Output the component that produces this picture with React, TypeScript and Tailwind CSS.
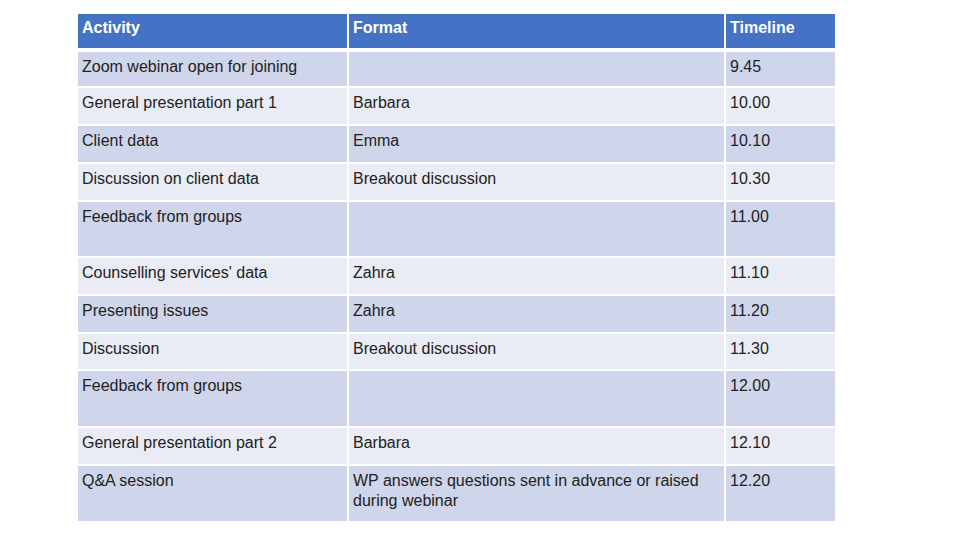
import React from "react";

type Row = {
  activity: string;
  format: string;
  time: string;
  h: string;
  bg: string;
};

const DARK = "bg-[#cfd5ea]";
const LIGHT = "bg-[#e9ebf5]";

const ROWS: Row[] = [
  { activity: "Zoom webinar open for joining", format: "", time: "9.45", h: "h-[34px]", bg: DARK },
  { activity: "General presentation part 1", format: "Barbara", time: "10.00", h: "h-[36px]", bg: LIGHT },
  { activity: "Client data", format: "Emma", time: "10.10", h: "h-[36px]", bg: DARK },
  { activity: "Discussion on client data", format: "Breakout discussion", time: "10.30", h: "h-[36px]", bg: LIGHT },
  { activity: "Feedback from groups", format: "", time: "11.00", h: "h-[54px]", bg: DARK },
  { activity: "Counselling services' data", format: "Zahra", time: "11.10", h: "h-[36px]", bg: LIGHT },
  { activity: "Presenting issues", format: "Zahra", time: "11.20", h: "h-[36px]", bg: DARK },
  { activity: "Discussion", format: "Breakout discussion", time: "11.30", h: "h-[35px]", bg: LIGHT },
  { activity: "Feedback from groups", format: "", time: "12.00", h: "h-[55px]", bg: DARK },
  { activity: "General presentation part 2", format: "Barbara", time: "12.10", h: "h-[36px]", bg: LIGHT },
  {
    activity: "Q&A session",
    format: "WP answers questions sent in advance or raised during webinar",
    time: "12.20",
    h: "h-[55px]",
    bg: DARK,
  },
];

const COLS = "grid grid-cols-[269px_375px_109px] gap-x-[2px]";

export default function App() {
  return (
    <div className="w-[960px] h-[540px] bg-white overflow-hidden font-['Liberation_Sans',Arial,sans-serif] text-[16px] leading-[20px]">
      <div className="ml-[78px] pt-[14px] w-[757px] flex flex-col gap-[2px]">
        {/* header */}
        <div className={`${COLS} h-[34px] mb-[2px]`}>
          {["Activity", "Format", "Timeline"].map((t) => (
            <div key={t} className="bg-[#4472c4] px-[4px] pt-[4px] font-bold text-white">
              {t}
            </div>
          ))}
        </div>

        {ROWS.map((r, i) => (
          <div key={i} className={`${COLS} ${r.h}`}>
            <div className={`${r.bg} px-[4px] pt-[5px] text-[#222]`}>{r.activity}</div>
            <div className={`${r.bg} px-[4px] pt-[5px] text-[#222]`}>{r.format}</div>
            <div className={`${r.bg} px-[4px] pt-[5px] text-[#222]`}>{r.time}</div>
          </div>
        ))}
      </div>
    </div>
  );
}
